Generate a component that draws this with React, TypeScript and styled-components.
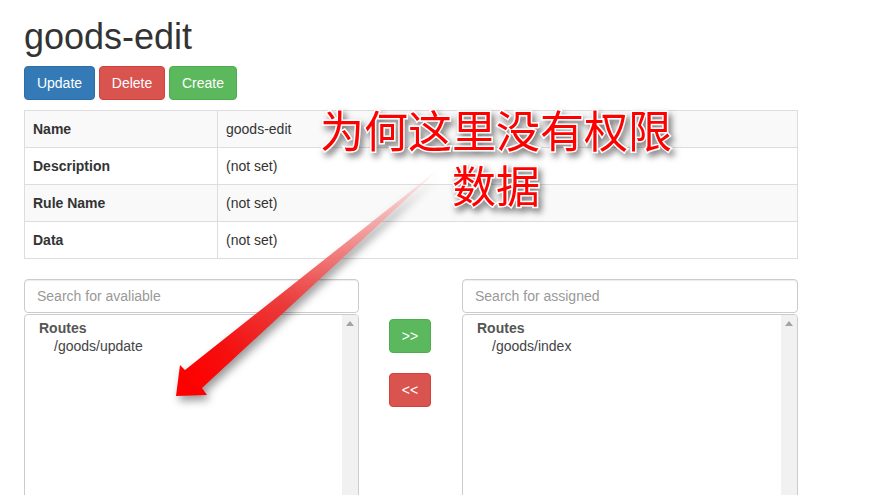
import React from 'react';
import styled, { createGlobalStyle } from 'styled-components';

const GlobalStyle = createGlobalStyle`
  * {
    box-sizing: border-box;
  }
  html, body {
    margin: 0;
    height: 100%;
    overflow: hidden;
    background: #fff;
  }
  body {
    font-family: 'Liberation Sans', Arial, sans-serif;
    font-size: 14px;
    line-height: 20px;
    color: #333;
  }
`;

const Page = styled.div`
  position: relative;
  width: 874px;
  height: 495px;
  overflow: hidden;
  padding-left: 24px;
`;
const Content = styled.div`
  width: 774px;
`;
const Title = styled.h1`
  margin: 17px 0 9px;
  font-size: 36px;
  font-weight: 500;
  line-height: 40px;
`;
const Toolbar = styled.div`
  display: flex;
  gap: 4px;
  margin-bottom: 10px;
`;
const colors = {
  primary: ['#337ab7', '#2e6da4'],
  danger: ['#d9534f', '#d43f3a'],
  success: ['#5cb85c', '#4cae4c'],
};
const Button = styled.button<{ $variant: keyof typeof colors; $width?: number }>`
  width: ${(props) => (props.$width ? `${props.$width}px` : 'auto')};
  height: 34px;
  padding: 6px 0;
  font: inherit;
  color: #fff;
  background: ${(props) => colors[props.$variant][0]};
  border: 1px solid ${(props) => colors[props.$variant][1]};
  border-radius: 4px;
`;
const Table = styled.table`
  width: 100%;
  border-collapse: collapse;
  table-layout: fixed;
  margin-bottom: 20px;
`;
const Row = styled.tr`
  &:nth-child(odd) {
    background: #f9f9f9;
  }
`;
const Head = styled.th`
  width: 193px;
  height: 37px;
  padding: 8px;
  text-align: left;
  font-weight: 700;
  border: 1px solid #ddd;
`;
const Cell = styled.td`
  height: 37px;
  padding: 8px;
  border: 1px solid #ddd;
`;
const Assign = styled.div`
  display: grid;
  grid-template-columns: 335px 103px 336px;
`;
const Column = styled.div`
  display: flex;
  flex-direction: column;
`;
const Search = styled.input`
  height: 34px;
  padding: 6px 12px;
  font: inherit;
  color: #555;
  border: 1px solid #ccc;
  border-radius: 4px;
  box-shadow: inset 0 1px 1px rgba(0, 0, 0, 0.075);
  outline: none;
  &::placeholder {
    color: #999;
    opacity: 1;
  }
`;
const ListBox = styled.div`
  display: flex;
  height: 300px;
  margin-top: 1px;
  border: 1px solid #ccc;
  border-radius: 4px;
  overflow: hidden;
`;
const ListBody = styled.div`
  flex: 1;
  padding: 4px 14px;
  line-height: 18px;
  color: #444;
`;
const Group = styled.div`
  font-weight: 700;
  color: #555;
`;
const Item = styled.div`
  padding-left: 15px;
`;
const Track = styled.div`
  display: flex;
  justify-content: center;
  width: 16px;
  padding-top: 6px;
  background: #f1f1f1;
`;
const TrackArrow = styled.div`
  width: 0;
  height: 0;
  border-left: 4px solid transparent;
  border-right: 4px solid transparent;
  border-bottom: 5px solid #a3a3a3;
`;
const Middle = styled.div`
  display: flex;
  flex-direction: column;
  align-items: center;
  gap: 20px;
  padding: 40px 1px 0 0;
`;
const Arrow = styled.svg`
  position: absolute;
  left: 0;
  top: 0;
  pointer-events: none;
  filter: drop-shadow(3px 5px 4px rgba(0, 0, 0, 0.4));
`;
const Note = styled.div`
  position: absolute;
  left: 316px;
  top: 102px;
  width: 360px;
  text-align: center;
  font-family: 'Noto Sans CJK SC', sans-serif;
  font-size: 44px;
  line-height: 55px;
  color: #f00;
  -webkit-text-stroke: 3px #fff;
  paint-order: stroke fill;
  filter: drop-shadow(3px 4px 3px rgba(0, 0, 0, 0.5));
`;

const details = [
  ['Name', 'goods-edit'],
  ['Description', '(not set)'],
  ['Rule Name', '(not set)'],
  ['Data', '(not set)'],
];

const RouteList = ({ placeholder, route }: { placeholder: string; route: string }) => {
  return (
    <Column>
      <Search placeholder={placeholder} readOnly />
      <ListBox>
        <ListBody>
          <Group>Routes</Group>
          <Item>{route}</Item>
        </ListBody>
        <Track>
          <TrackArrow />
        </Track>
      </ListBox>
    </Column>
  );
};

const App = () => {
  return (
    <Page>
      <GlobalStyle />
      <Content>
        <Title>goods-edit</Title>
        <Toolbar>
          <Button $variant="primary" $width={71}>Update</Button>
          <Button $variant="danger" $width={66}>Delete</Button>
          <Button $variant="success" $width={68}>Create</Button>
        </Toolbar>
        <Table>
          <tbody>
            {details.map(([label, value]) => (
              <Row key={label}>
                <Head>{label}</Head>
                <Cell>{value}</Cell>
              </Row>
            ))}
          </tbody>
        </Table>
        <Assign>
          <RouteList placeholder="Search for avaliable" route="/goods/update" />
          <Middle>
            <Button $variant="success" $width={42}>&gt;&gt;</Button>
            <Button $variant="danger" $width={42}>&lt;&lt;</Button>
          </Middle>
          <RouteList placeholder="Search for assigned" route="/goods/index" />
        </Assign>
      </Content>
      <Arrow width="874" height="495" viewBox="0 0 874 495">
        <defs>
          <linearGradient id="arrowFill" gradientUnits="userSpaceOnUse" x1="440" y1="168" x2="190" y2="385">
            <stop offset="0" stopColor="#fbd0d0" stopOpacity="0.15" />
            <stop offset="0.18" stopColor="#f7b0b0" stopOpacity="0.8" />
            <stop offset="0.4" stopColor="#f27272" stopOpacity="0.9" />
            <stop offset="0.62" stopColor="#ee3535" stopOpacity="0.95" />
            <stop offset="0.85" stopColor="#f50f0f" />
            <stop offset="1" stopColor="#ff0000" />
          </linearGradient>
        </defs>
        <path d="M440 168 L202 388 L207 395 L176 396 L180 365 L185 370 Z" fill="url(#arrowFill)" />
      </Arrow>
      <Note>
        为何这里没有权限
        <br />
        数据
      </Note>
    </Page>
  );
};

export default App;
